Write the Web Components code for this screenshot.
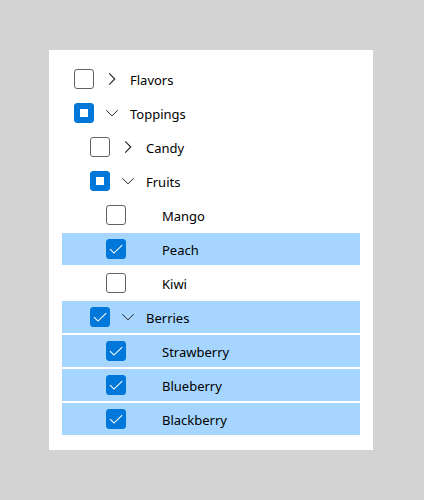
<!DOCTYPE html>
<html lang="en">
<head>
<meta charset="utf-8">
<meta name="viewport" content="width=device-width, initial-scale=1">
<title>Flavors and toppings</title>
<style>
  body {
    margin: 0;
    padding: 50px 51px 50px 49px;
    background: #d3d3d3;
    color: #000;
    font: 13px/20px "Noto Sans", "Open Sans", sans-serif;
  }
</style>
</head>
<body>
<tree-view label="Flavors and toppings">
  <tree-item label="Flavors" branch></tree-item>
  <tree-item label="Toppings" branch expanded state="mixed">
    <tree-item label="Candy" branch></tree-item>
    <tree-item label="Fruits" branch expanded state="mixed">
      <tree-item label="Mango"></tree-item>
      <tree-item label="Peach" state="checked"></tree-item>
      <tree-item label="Kiwi"></tree-item>
    </tree-item>
    <tree-item label="Berries" branch expanded state="checked">
      <tree-item label="Strawberry" state="checked"></tree-item>
      <tree-item label="Blueberry" state="checked"></tree-item>
      <tree-item label="Blackberry" state="checked"></tree-item>
    </tree-item>
  </tree-item>
</tree-view>

<template id="tree-view-template">
  <style>
    :host { display: block; padding: 13px 13px 15px; background: #fff; }
    div { display: flex; flex-direction: column; gap: 2px; }
  </style>
  <div role="tree"><slot></slot></div>
</template>

<template id="tree-check-template">
  <style>
    :host { display: inline-grid; flex: none; width: 20px; height: 20px; }
    input, svg { grid-area: 1 / 1; }
    input {
      appearance: none;
      box-sizing: border-box;
      width: 20px;
      height: 20px;
      margin: 0;
      border: 1px solid #626262;
      border-radius: 3px;
      background: #fff;
    }
    input:checked, input:indeterminate { border-color: #0078d9; background: #0078d9; }
    svg { display: none; pointer-events: none; z-index: 1; }
    input:checked:not(:indeterminate) ~ .tick, input:indeterminate ~ .mixed { display: block; }
  </style>
  <input type="checkbox">
  <svg class="tick" width="20" height="20" viewBox="0 0 20 20" fill="none" stroke="#fff" stroke-width="1.1" aria-hidden="true"><path d="M4 10.2 8 14.1 16.2 6.2"/></svg>
  <svg class="mixed" width="20" height="20" viewBox="0 0 20 20" fill="#fff" aria-hidden="true"><path d="M6 6h8v8H6z"/></svg>
</template>

<template id="tree-item-template">
  <style>
    :host { display: flex; flex-direction: column; gap: 2px; }
    .row {
      display: flex;
      align-items: center;
      gap: 12px;
      height: 32px;
      padding-left: calc(12px + var(--depth) * 16px);
    }
    :host([state="checked"]) .row { background: #a6d6ff; }
    button {
      display: grid;
      flex: none;
      width: 12px;
      height: 12px;
      padding: 0;
      border: 0;
      background: none;
      color: #222;
    }
    :host(:not([branch])) button { visibility: hidden; }
    .open, :host([expanded]) .closed { display: none; }
    :host([expanded]) .open { display: block; }
    .children { display: none; }
    :host([expanded]) .children { display: flex; flex-direction: column; gap: 2px; }
    .name { padding-top: 2px; }
  </style>
  <div class="row">
    <tree-check></tree-check>
    <button type="button">
      <svg class="closed" width="12" height="12" viewBox="0 0 12 12" fill="none" stroke="currentColor" stroke-width="1.1" aria-hidden="true"><path d="M3.2 .4 8.8 6 3.2 11.6"/></svg>
      <svg class="open" width="12" height="12" viewBox="0 0 12 12" fill="none" stroke="currentColor" stroke-width="1" aria-hidden="true"><path d="M.3 3.2 6 8.9 11.7 3.2"/></svg>
    </button>
    <span class="name"></span>
  </div>
  <div class="children" role="group"><slot></slot></div>
</template>

<script>
  const stamp = (host, id) => {
    const root = host.attachShadow({ mode: "open" });
    root.append(document.getElementById(id).content.cloneNode(true));
    return root;
  };

  class TreeCheck extends HTMLElement {
    constructor() {
      super();
      this.input = stamp(this, "tree-check-template").querySelector("input");
      this.input.addEventListener("change", () =>
        this.dispatchEvent(new CustomEvent("toggle-check", { detail: this.input.checked })));
    }
    update(label, state) {
      this.input.setAttribute("aria-label", label);
      this.input.checked = state === "checked";
      this.input.indeterminate = state === "mixed";
    }
  }

  class TreeItem extends HTMLElement {
    static observedAttributes = ["state", "expanded"];
    connectedCallback() {
      if (!this.shadowRoot) {
        const root = stamp(this, "tree-item-template");
        customElements.upgrade(root);
        root.querySelector("button").addEventListener("click", () => this.toggleAttribute("expanded"));
        root.querySelector("tree-check").addEventListener("toggle-check", e => {
          this.querySelectorAll("tree-item").forEach(item => item.setState(e.detail));
          this.setState(e.detail);
          this.parentElement.closest("tree-item")?.summarize();
        });
      }
      let depth = 0;
      for (let p = this.parentElement; p && p.localName === "tree-item"; p = p.parentElement) depth++;
      this.style.setProperty("--depth", depth);
      this.setAttribute("role", "treeitem");
      this.render();
    }
    attributeChangedCallback() { if (this.shadowRoot) this.render(); }
    setState(checked) {
      if (checked) this.setAttribute("state", "checked");
      else this.removeAttribute("state");
    }
    summarize() {
      const states = [...this.children].map(item => item.getAttribute("state"));
      if (states.every(s => s === "checked")) this.setState(true);
      else if (states.every(s => !s)) this.setState(false);
      else this.setAttribute("state", "mixed");
      this.parentElement.closest("tree-item")?.summarize();
    }
    render() {
      const root = this.shadowRoot, label = this.getAttribute("label");
      const expanded = this.hasAttribute("expanded");
      root.querySelector(".name").textContent = label;
      root.querySelector("tree-check").update(label, this.getAttribute("state"));
      const button = root.querySelector("button");
      button.setAttribute("aria-label", (expanded ? "Collapse " : "Expand ") + label);
      button.setAttribute("aria-expanded", expanded);
    }
  }

  class TreeView extends HTMLElement {
    connectedCallback() {
      if (this.shadowRoot) return;
      stamp(this, "tree-view-template").querySelector("div").setAttribute("aria-label", this.getAttribute("label"));
    }
  }

  customElements.define("tree-check", TreeCheck);
  customElements.define("tree-item", TreeItem);
  customElements.define("tree-view", TreeView);
</script>
</body>
</html>
